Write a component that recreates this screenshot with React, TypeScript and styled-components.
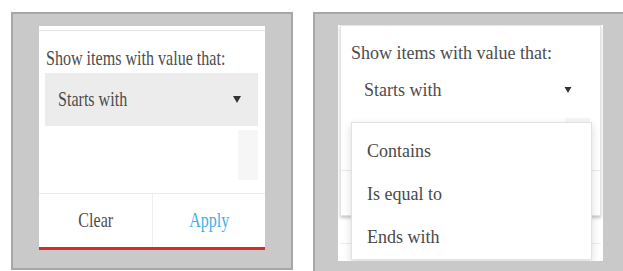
import React from 'react'
import styled, { createGlobalStyle } from 'styled-components'

//CSS
const GlobalStyle = createGlobalStyle`
    html, body {
        margin: 0;
        padding: 0;
        background: #fff;
        overflow: hidden;
    }
    body {
        font-family: "Liberation Serif", "Times New Roman", serif;
    }
`
const Page = styled.div`
    display: flex;
    align-items: flex-start;
    gap: 20px;
    width: 623px;
    height: 271px;
    padding: 12px 0 0 11px;
    box-sizing: border-box;
    overflow: hidden;
`
const Frame = styled.div<{ $open?: boolean }>`
    flex-shrink: 0;
    box-sizing: border-box;
    background: #c9c9c9;
    border: 2px solid #a7a7a7;
    width: ${p => (p.$open ? '320px' : '282px')};
    height: ${p => (p.$open ? '270px' : '258px')};
    padding: ${p => (p.$open ? '11px 0 0 23px' : '12px 0 0 26px')};
    ${p => p.$open && 'border-right: none; border-bottom: none;'}
`
// squeezed text of the left (horizontally scaled) shot
const Squeeze = styled.span<{ $origin?: string }>`
    display: inline-block;
    white-space: nowrap;
    transform: scaleX(0.765);
    transform-origin: ${p => p.$origin || 'left'} center;
`

// left panel
const FilterCard = styled.div`
    display: flex;
    flex-direction: column;
    width: 226px;
    height: 224px;
    background: #fff;
    border-bottom: 3px solid #d42b2b;
    box-sizing: border-box;
`
const TopStrip = styled.div`
    height: 5px;
    border-bottom: 1px solid #e6e6e6;
    box-sizing: border-box;
`
const Label = styled.div<{ $small?: boolean }>`
    margin: ${p => (p.$small ? '15.5px 0 0 10px' : '15px 0 0 7px')};
    font-size: ${p => (p.$small ? '18px' : '21px')};
    line-height: ${p => (p.$small ? '22px' : '24px')};
    height: ${p => (p.$small ? '22px' : '24px')};
    color: #4d4d4d;
`
const Select = styled.div<{ $small?: boolean }>`
    display: flex;
    align-items: center;
    justify-content: space-between;
    box-sizing: border-box;
    margin: ${p => (p.$small ? '4.5px 8px 0 10px' : '3px 7px 0 6px')};
    height: ${p => (p.$small ? '44px' : '53px')};
    padding: ${p => (p.$small ? '0 20px 0 13px' : '0 17px 0 13px')};
    background: ${p => (p.$small ? '#fff' : '#ececec')};
    font-size: ${p => (p.$small ? '18px' : '21px')};
    color: #4d4d4d;
`
const Body = styled.div<{ $small?: boolean }>`
    display: flex;
    justify-content: flex-end;
    align-items: flex-start;
    height: ${p => (p.$small ? '58px' : '67px')};
    padding: ${p => (p.$small ? '6px 10px 0 0' : '4px 7px 0 0')};
    box-sizing: border-box;
`
const Scroller = styled.div<{ $small?: boolean }>`
    width: ${p => (p.$small ? '25px' : '20px')};
    height: 50px;
    background: #f6f6f6;
`
const Footer = styled.div<{ $small?: boolean }>`
    display: grid;
    grid-template-columns: 1fr 1fr;
    height: ${p => (p.$small ? '45px' : '54px')};
    border-top: 1px solid #ebebeb;
    box-sizing: border-box;
`
const FooterButton = styled.div<{ $primary?: boolean }>`
    display: flex;
    align-items: center;
    justify-content: center;
    font-size: 21px;
    color: ${p => (p.$primary ? '#3fb0e6' : '#4d4d4d')};
    ${p => p.$primary && 'border-left: 1px solid #efefef;'}
`

// right panel
const Sheet = styled.div`
    position: relative;
    width: 265px;
    height: 236px;
    padding: 0 2px;
    box-sizing: border-box;
    background: #fff;
    overflow: hidden;
`
const OpenCard = styled.div`
    display: flex;
    flex-direction: column;
    width: 261px;
    height: 191px;
    border: 1px solid #e4e4e4;
    box-sizing: border-box;
    background: #fff;
    box-shadow: 0 2px 3px rgba(0, 0, 0, 0.22);
`
const SheetRow = styled.div`
    height: 27px;
    border-bottom: 1px solid #ececec;
`
const Menu = styled.ul`
    position: absolute;
    left: 13px;
    top: 97px;
    width: 241px;
    margin: 0;
    padding: 7px 0 0;
    list-style: none;
    background: #fff;
    border: 1px solid #e2e2e2;
    box-sizing: border-box;
    box-shadow: 0 3px 8px rgba(0, 0, 0, 0.15);
`
const MenuItem = styled.li`
    height: 43px;
    line-height: 43px;
    padding-left: 15px;
    font-size: 18px;
    color: #4a4a4a;
`

const Caret: React.FC<{ small?: boolean }> = ({ small }) => (
    <svg width="8" height={small ? 6 : 7} viewBox="0 0 8 7">
        <polygon points="0,0 8,0 4,7" fill="#333" />
    </svg>
)

const App = () => {
    const options = ['Contains', 'Is equal to', 'Ends with']

    return (
        <React.Fragment>
            <GlobalStyle />
            <Page>
                <Frame>
                    <FilterCard>
                        <TopStrip />
                        <Label>
                            <Squeeze>Show items with value that:</Squeeze>
                        </Label>
                        <Select>
                            <Squeeze>Starts with</Squeeze>
                            <Caret />
                        </Select>
                        <Body>
                            <Scroller />
                        </Body>
                        <Footer>
                            <FooterButton>
                                <Squeeze $origin="center">Clear</Squeeze>
                            </FooterButton>
                            <FooterButton $primary>
                                <Squeeze $origin="center">Apply</Squeeze>
                            </FooterButton>
                        </Footer>
                    </FilterCard>
                </Frame>
                <Frame $open>
                    <Sheet>
                        <OpenCard>
                            <Label $small>Show items with value that:</Label>
                            <Select $small>
                                <span>Starts with</span>
                                <Caret small />
                            </Select>
                            <Body $small>
                                <Scroller $small />
                            </Body>
                            <Footer $small />
                        </OpenCard>
                        <SheetRow />
                        <Menu>
                            {options.map(o => (
                                <MenuItem key={o}>{o}</MenuItem>
                            ))}
                        </Menu>
                    </Sheet>
                </Frame>
            </Page>
        </React.Fragment>
    )
}
export default App
